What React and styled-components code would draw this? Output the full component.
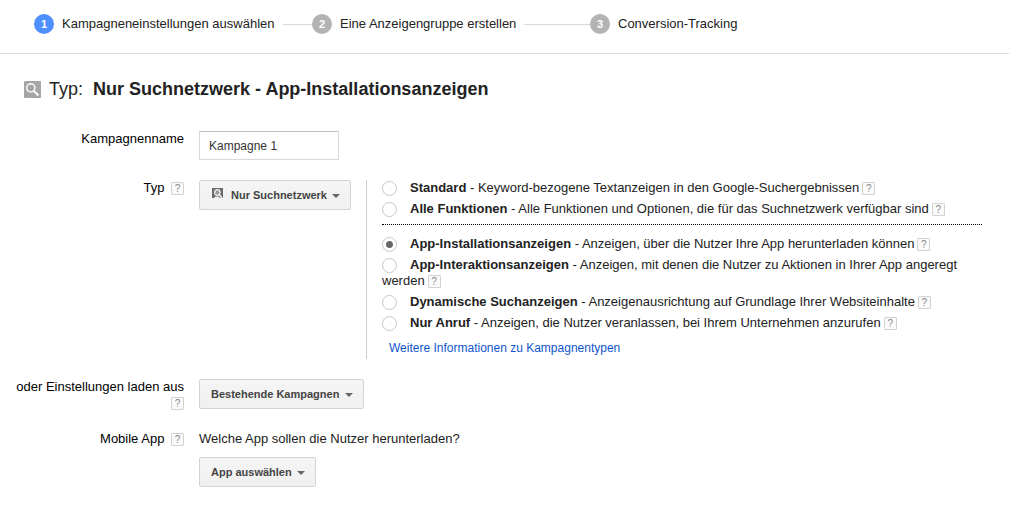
import React, { useState } from 'react';
import styled, { createGlobalStyle } from 'styled-components';

const GlobalStyle = createGlobalStyle`
    * {
        box-sizing: border-box;
    }
    body {
        margin: 0;
        background: #fff;
        color: #000;
        font: 13px/16px "Liberation Sans", Arial, sans-serif;
    }
`;

const Steps = styled.ol`
    display: flex;
    margin: 0;
    padding: 14px 34px 19px;
    list-style: none;
    border-bottom: 1px solid #d9d9d9;
`;

const Step = styled.li`
    display: flex;
    align-items: center;
    gap: 8px;
    width: 278px;
    color: #222;
    white-space: nowrap;
    &:not(:last-child)::after {
        content: '';
        flex: 1;
        height: 1px;
        background: #d9d9d9;
    }
`;

const StepNumber = styled.span`
    width: 20px;
    height: 20px;
    border-radius: 50%;
    background: ${props => props.$active ? '#4d90fe' : '#b3b3b3'};
    color: #fff;
    font-size: 11px;
    font-weight: bold;
    line-height: 20px;
    text-align: center;
`;

const Title = styled.h1`
    display: flex;
    align-items: center;
    margin: 0;
    padding: 24px 24px 0;
    color: #222;
    font-size: 18px;
    font-weight: normal;
    line-height: 22px;
    svg {
        margin-right: 8px;
    }
    strong {
        margin-left: 10px;
    }
`;

const Form = styled.form`
    display: flex;
    flex-direction: column;
    gap: 20px;
    padding: 31px 27px 29px 12px;
`;

const Row = styled.div`
    display: grid;
    grid-template-columns: 172px 1fr;
    gap: 15px;
    align-items: start;
`;

const RowLabel = styled.div`
    text-align: right;
    button {
        margin-left: 3px;
    }
`;

const Help = styled.button`
    width: 13px;
    height: 13px;
    padding: 0;
    border: 1px solid #d2d2d2;
    border-radius: 1px;
    background: #fafafa;
    color: #888;
    font: 10px/11px "Liberation Sans", Arial, sans-serif;
    text-align: center;
    vertical-align: text-bottom;
    cursor: pointer;
`;

const TextInput = styled.input`
    width: 140px;
    height: 29px;
    padding: 1px 9px;
    border: 1px solid #d9d9d9;
    border-top-color: #c0c0c0;
    background: #fff;
    color: #333;
    font: 12px "Liberation Sans", Arial, sans-serif;
`;

const Picker = styled.div`
    position: relative;
    width: fit-content;
    svg {
        position: absolute;
        pointer-events: none;
    }
`;

const Select = styled.select`
    appearance: none;
    display: block;
    height: 30px;
    padding: 0 23px 0 ${props => props.$icon ? '31px' : '11px'};
    border: 1px solid #d4d4d4;
    border-radius: 2px;
    background: linear-gradient(#f5f5f5, #f0f0f0);
    color: #444;
    font: bold 11px "Liberation Sans", Arial, sans-serif;
    cursor: pointer;
`;

const Caret = styled.svg`
    top: 14px;
    right: 11px;
`;

const PickerIcon = styled.svg`
    top: 8px;
    left: 13px;
`;

const TypeField = styled.div`
    display: flex;
    align-items: flex-start;
    gap: 15px;
`;

const TypePanel = styled.div`
    flex: 1;
    max-width: 616px;
    padding: 0 0 3px 15px;
    border-left: 1px solid #ccc;
    color: #222;
`;

const Options = styled.div`
    display: flex;
    flex-direction: column;
    gap: 5px;
`;

const Divider = styled.hr`
    margin: 7px 0 11px;
    border: 0;
    border-top: 1px dotted #000;
`;

const Option = styled.div`
    button {
        margin-left: 3px;
    }
`;

const Radio = styled.input`
    appearance: none;
    width: 15px;
    height: 15px;
    margin: 1px 13px 0 0;
    border: 1px solid #c6c6c6;
    border-radius: 50%;
    background: #fff;
    vertical-align: top;
    &:checked {
        background: radial-gradient(circle, #666 3px, #fff 4px);
    }
`;

const MoreLink = styled.a`
    display: block;
    width: fit-content;
    margin: 9px 0 0 7px;
    color: #15c;
    font-size: 12px;
    text-decoration: none;
`;

const AppField = styled.div`
    display: flex;
    flex-direction: column;
    gap: 10px;
    color: #222;
`;

const steps = ['Kampagneneinstellungen auswählen', 'Eine Anzeigengruppe erstellen', 'Conversion-Tracking'];

const basicTypes = [
    { id: 'standard', name: 'Standard', text: 'Keyword-bezogene Textanzeigen in den Google-Suchergebnissen' },
    { id: 'all', name: 'Alle Funktionen', text: 'Alle Funktionen und Optionen, die für das Suchnetzwerk verfügbar sind' },
];

const specialTypes = [
    { id: 'install', name: 'App-Installationsanzeigen', text: 'Anzeigen, über die Nutzer Ihre App herunterladen können' },
    { id: 'engage', name: 'App-Interaktionsanzeigen', text: 'Anzeigen, mit denen die Nutzer zu Aktionen in Ihrer App angeregt werden' },
    { id: 'dynamic', name: 'Dynamische Suchanzeigen', text: 'Anzeigenausrichtung auf Grundlage Ihrer Websiteinhalte' },
    { id: 'call', name: 'Nur Anruf', text: 'Anzeigen, die Nutzer veranlassen, bei Ihrem Unternehmen anzurufen' },
];

const HelpButton = () => <Help type="button" aria-label="Hilfe">?</Help>;

const SearchIcon = () => (
    <svg width="17" height="17" viewBox="0 0 17 17" aria-hidden="true">
        <rect width="17" height="17" rx="1" fill="#a6a6a6" />
        <circle cx="6.8" cy="6.8" r="4.1" fill="none" stroke="#fff" strokeWidth="1.4" />
        <path d="M9.800 9.800l4.700 4.700" stroke="#fff" strokeWidth="1.800" />
    </svg>
);

const Dropdown = ({ id, value, icon }) => (
    <Picker>
        <Select id={id} $icon={icon}>
            <option>{value}</option>
        </Select>
        {icon && (
            <PickerIcon width="11" height="11" viewBox="0 0 11 11" aria-hidden="true">
                <path d="M0 0h11v10H0z" fill="#6b6b6b" />
                <circle cx="5.3" cy="4.500" r="2.800" fill="#9a9a9a" stroke="#f3f3f3" strokeWidth="1.200" />
                <path d="M7.200 6.500l3 4" stroke="#f3f3f3" strokeWidth="1.500" />
                <path d="M2 10l1.500-1.500h3L8 10z" fill="#f3f3f3" />
            </PickerIcon>
        )}
        <Caret width="8" height="4" viewBox="0 0 8 4" aria-hidden="true">
            <path d="M0 0h8L4 4z" fill="#666" />
        </Caret>
    </Picker>
);

const App = () => {
    const [name, setName] = useState('Kampagne 1');
    const [type, setType] = useState('install');

    const renderOption = item => (
        <Option key={item.id}>
            <label>
                <Radio
                    type="radio"
                    name="type"
                    value={item.id}
                    checked={type === item.id}
                    onChange={() => setType(item.id)}
                />
                <b>{item.name}</b> - {item.text}
            </label>
            <HelpButton />
        </Option>
    );

    return (
        <>
            <GlobalStyle />
            <Steps>
                {steps.map((step, i) => (
                    <Step key={step}>
                        <StepNumber $active={i === 0}>{i + 1}</StepNumber>
                        {step}
                    </Step>
                ))}
            </Steps>
            <Title>
                <SearchIcon />
                Typ: <strong>Nur Suchnetzwerk - App-Installationsanzeigen</strong>
            </Title>
            <Form>
                <Row>
                    <RowLabel><label htmlFor="name">Kampagnenname</label></RowLabel>
                    <TextInput id="name" type="text" value={name} onChange={e => setName(e.target.value)} />
                </Row>
                <Row>
                    <RowLabel><label htmlFor="network">Typ</label> <HelpButton /></RowLabel>
                    <TypeField>
                        <Dropdown id="network" value="Nur Suchnetzwerk" icon />
                        <TypePanel>
                            <Options>{basicTypes.map(renderOption)}</Options>
                            <Divider />
                            <Options>{specialTypes.map(renderOption)}</Options>
                            <MoreLink href="#types">Weitere Informationen zu Kampagnentypen</MoreLink>
                        </TypePanel>
                    </TypeField>
                </Row>
                <Row>
                    <RowLabel><label htmlFor="existing">oder Einstellungen laden aus</label> <HelpButton /></RowLabel>
                    <Dropdown id="existing" value="Bestehende Kampagnen" />
                </Row>
                <Row>
                    <RowLabel><label htmlFor="app">Mobile App</label> <HelpButton /></RowLabel>
                    <AppField>
                        <span>Welche App sollen die Nutzer herunterladen?</span>
                        <Dropdown id="app" value="App auswählen" />
                    </AppField>
                </Row>
            </Form>
        </>
    );
};

export default App;
